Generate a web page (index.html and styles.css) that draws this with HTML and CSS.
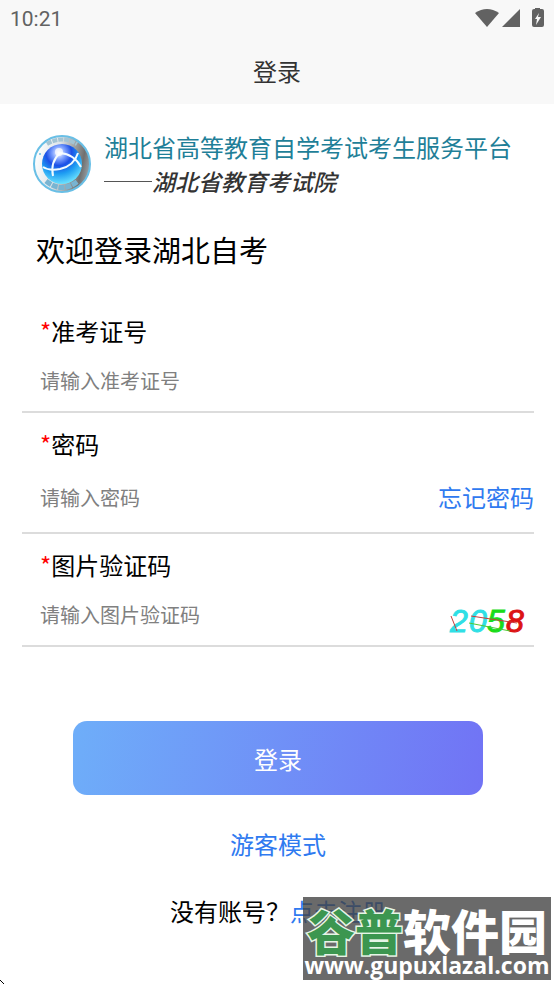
FILE: index.html
```html
<!DOCTYPE html>
<html lang="zh-CN">
<head>
  <meta charset="UTF-8" />
  <meta name="viewport" content="width=device-width, initial-scale=1.0" />
  <title>登录</title>
  <link rel="stylesheet" href="styles.css">
</head>
<body>
  <header class="top">
    <div class="status">
      <span>10:21</span>
      <svg class="status-icons" width="72" height="22" viewBox="0 0 72 22" fill="#626262">
        <path d="M0 5Q12 -3 24 5L12 19Z"/>
        <path d="M45 1V19H27Z"/>
        <path fill-rule="evenodd" d="M60 0H65V1H67Q69 1 69 3V17Q69 19 67 19H59Q57 19 57 17V3Q57 1 59 1H60ZM64 5L60 11H62L61 17L66 9H63Z"/>
      </svg>
    </div>
    <div class="top-title">登录</div>
  </header>

  <main>
    <div class="brand">
      <svg class="brand-logo" width="60" height="60" viewBox="0 0 60 60">
        <defs>
          <linearGradient id="ring" x1="0" y1="0.4" x2="1" y2="0.6">
            <stop offset="0" stop-color="#ffffff"/>
            <stop offset="0.4" stop-color="#dde4e8"/>
            <stop offset="0.85" stop-color="#707070"/>
            <stop offset="1" stop-color="#9aa5ab"/>
          </linearGradient>
          <radialGradient id="globe" cx="0.42" cy="0.22" r="0.8">
            <stop offset="0" stop-color="#ffffff"/>
            <stop offset="0.2" stop-color="#7fa2ff"/>
            <stop offset="0.4" stop-color="#1c50e6"/>
            <stop offset="0.65" stop-color="#1d9cf2"/>
            <stop offset="1" stop-color="#6fe6ff"/>
          </radialGradient>
        </defs>
        <circle cx="30" cy="30" r="28" fill="url(#ring)" stroke="#69bfe6" stroke-width="2"/>
        <path d="M15 10Q30 1 45 10" fill="none" stroke="#a3c4d4" stroke-width="4" stroke-dasharray="5 1"/>
        <path d="M14 47Q30 60 46 47" fill="none" stroke="#78b4d2" stroke-width="5" stroke-dasharray="6 1"/>
        <circle cx="8" cy="20" r="1" fill="#69bfe6"/>
        <circle cx="30" cy="30" r="20" fill="url(#globe)"/>
        <path d="M11 33Q17 37 28 35Q42 32 46 19" fill="none" stroke="#f2fbff" stroke-width="2"/>
        <path d="M21 42Q18 28 28 19Q42 20 49 33" fill="none" stroke="#f2fbff" stroke-width="2"/>
        <circle cx="27" cy="18" r="4" fill="#ffffff" opacity="0.7"/>
      </svg>
      <div class="brand-text">
        <div class="brand-name">湖北省高等教育自学考试考生服务平台</div>
        <div class="brand-org"><span class="dash"></span>湖北省教育考试院</div>
      </div>
    </div>

    <h1>欢迎登录湖北自考</h1>

    <form>
      <div class="field">
        <label for="ticket"><span class="required">*</span>准考证号</label>
        <div class="field-row">
          <input type="text" id="ticket" placeholder="请输入准考证号">
        </div>
      </div>
      <div class="field">
        <label for="password"><span class="required">*</span>密码</label>
        <div class="field-row tall">
          <input type="password" id="password" placeholder="请输入密码">
          <a href="#">忘记密码</a>
        </div>
      </div>
      <div class="field">
        <label for="captcha"><span class="required">*</span>图片验证码</label>
        <div class="field-row">
          <input type="text" id="captcha" placeholder="请输入图片验证码">
          <svg class="captcha" width="88" height="36" viewBox="0 0 88 36">
            <g class="captcha-code">
              <text x="4" y="28" fill="#2fdfe5" stroke="#2fdfe5">2</text>
              <text x="23" y="28" fill="#2fdfe5" stroke="#2fdfe5">0</text>
              <text x="41" y="28" fill="#19dc19" stroke="#19dc19">5</text>
              <text x="60" y="28" fill="#dc1414" stroke="#dc1414">8</text>
            </g>
            <path d="M5 12L11 27M25 12L71 19" fill="none" stroke="#c83c3c"/>
            <path d="M23 19L64 27" fill="none" stroke="#50c832"/>
          </svg>
        </div>
      </div>
      <button type="submit" class="btn">登录</button>
    </form>

    <div class="guest"><a href="#">游客模式</a></div>
    <div class="register">没有账号？<a href="#">点击注册</a></div>
  </main>

  <div class="watermark">
    <div class="watermark-name"><span>谷普</span>软件园</div>
    <div class="watermark-url">www.gupuxlazal.com</div>
  </div>
  <svg class="corner" width="4" height="4" viewBox="0 0 4 4"><path d="M0 0H1V1H0ZM1 1H2V2H1ZM2 2H3V3H2ZM3 3H4V4H3Z"/></svg>
</body>
</html>
```
FILE: styles.css
```css
:root {
  --bar-bg: #f8f8f8;
  --link: #2f7af0;
  --line: #dcdcdc;
}

* {
  box-sizing: border-box;
}

body {
  margin: 0;
  min-height: 100vh;
  position: relative;
  background: #fff;
  color: #000;
  font-family: "Noto Sans CJK SC", sans-serif;
  font-size: 24px;
  line-height: 36px;
}

a {
  color: var(--link);
  text-decoration: none;
}

.top {
  background: var(--bar-bg);
}

.status {
  display: flex;
  justify-content: space-between;
  align-items: center;
  height: 38px;
  padding: 0 7px 0 10px;
  color: #626262;
  font-family: Roboto, sans-serif;
  font-size: 21px;
}

.top-title {
  line-height: 66px;
  text-align: center;
  color: #333;
}

main {
  padding: 26px 20px 0 22px;
}

.brand {
  display: flex;
  align-items: center;
  gap: 12px;
  padding-left: 10px;
}

.brand-logo {
  flex: none;
}

.brand-text {
  line-height: 34px;
  white-space: nowrap;
}

.brand-name {
  color: #1f7f98;
}

.brand-org {
  display: flex;
  align-items: center;
  color: #333;
  font-size: 23px;
  font-style: italic;
  font-weight: 500;
}

.dash {
  width: 48px;
  height: 1px;
  background: #555;
}

h1 {
  margin: 31px 0 31px 14px;
  font-size: 29px;
  font-weight: 400;
  line-height: 40px;
}

.field {
  padding-top: 13px;
  border-bottom: 2px solid var(--line);
}

.field label {
  display: block;
  padding-left: 18px;
}

.required {
  color: #f00;
}

.field-row {
  display: flex;
  align-items: center;
  height: 62px;
}

.field-row.tall {
  height: 70px;
}

.field input {
  flex: 1;
  min-width: 0;
  height: 100%;
  padding: 0 0 0 18px;
  border: none;
  outline: none;
  background: none;
  font-family: inherit;
  font-size: 20px;
}

.field input::placeholder {
  color: #808080;
}

.captcha {
  margin-top: 16px;
}

.captcha-code {
  font: italic 32px "Liberation Sans", sans-serif;
  stroke-width: 1;
}

.btn {
  display: block;
  width: 80%;
  height: 74px;
  margin: 74px auto 0;
  border: none;
  border-radius: 14px;
  background: linear-gradient(100deg, #6eaef9, #7173f5);
  color: #fff;
  font-family: inherit;
  font-size: 24px;
  cursor: pointer;
}

.guest {
  margin: 31px 0;
  text-align: center;
}

.register {
  text-align: center;
}

/* site stamp over the bottom right corner */
.watermark {
  position: absolute;
  right: 3px;
  bottom: 4px;
  width: 248px;
  height: 83px;
  background: rgba(64, 64, 64, 0.78);
  color: #fff;
  text-align: center;
  white-space: nowrap;
}

.watermark-name {
  padding-top: 8px;
  font-size: 48px;
  font-weight: 900;
  line-height: 48px;
}

.watermark-name span {
  color: #3c9650;
  -webkit-text-stroke: 3px #e6f5e6;
  paint-order: stroke fill;
}

.watermark-url {
  font-family: "Open Sans", sans-serif;
  font-size: 23px;
  font-weight: 700;
  line-height: 24px;
}

.corner {
  position: absolute;
  left: 0;
  bottom: 0;
}
```
